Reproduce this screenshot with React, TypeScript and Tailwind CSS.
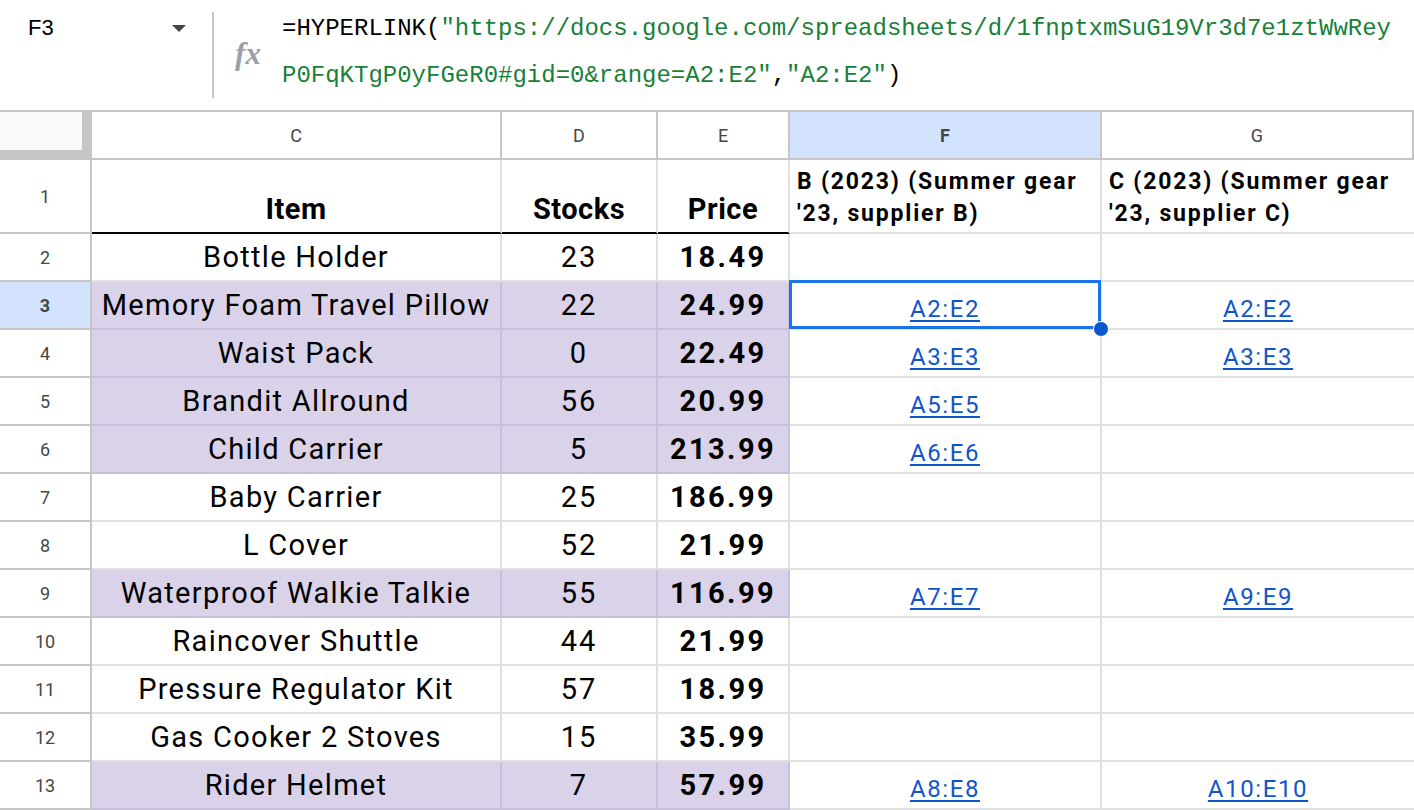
import React from 'react';

type Row = {
  n: number;
  item: string;
  stock: string;
  price: string;
  purple?: boolean;
  f?: string;
  g?: string;
};

const rows: Row[] = [
  { n: 2, item: 'Bottle Holder', stock: '23', price: '18.49' },
  { n: 3, item: 'Memory Foam Travel Pillow', stock: '22', price: '24.99', purple: true, f: 'A2:E2', g: 'A2:E2' },
  { n: 4, item: 'Waist Pack', stock: '0', price: '22.49', purple: true, f: 'A3:E3', g: 'A3:E3' },
  { n: 5, item: 'Brandit Allround', stock: '56', price: '20.99', purple: true, f: 'A5:E5' },
  { n: 6, item: 'Child Carrier', stock: '5', price: '213.99', purple: true, f: 'A6:E6' },
  { n: 7, item: 'Baby Carrier', stock: '25', price: '186.99' },
  { n: 8, item: 'L Cover', stock: '52', price: '21.99' },
  { n: 9, item: 'Waterproof Walkie Talkie', stock: '55', price: '116.99', purple: true, f: 'A7:E7', g: 'A9:E9' },
  { n: 10, item: 'Raincover Shuttle', stock: '44', price: '21.99' },
  { n: 11, item: 'Pressure Regulator Kit', stock: '57', price: '18.99' },
  { n: 12, item: 'Gas Cooker 2 Stoves', stock: '15', price: '35.99' },
  { n: 13, item: 'Rider Helmet', stock: '7', price: '57.99', purple: true, f: 'A8:E8', g: 'A10:E10' },
];

const cellFont = { fontFamily: 'Roboto, Arial, sans-serif' };

const FormulaBar = () => (
  <div className="flex h-[110px] items-stretch bg-white">
    {/* name box */}
    <div className="flex w-[212px] items-start justify-between pl-[28px] pr-[26px] pt-[15px]">
      <span className="text-[22px] leading-[26px] text-black" style={{ fontFamily: 'Arial, "Liberation Sans", sans-serif' }}>
        F3
      </span>
      <svg width="14" height="8" viewBox="0 0 14 8" className="mt-[10px]">
        <path d="M0 0 L14 0 L7 7 Z" fill="#444746" />
      </svg>
    </div>
    <div className="my-[12px] w-[2px] bg-[#c4c7c5]" />
    <div className="flex w-[68px] items-center justify-center pb-[2px]">
      <span
        className="text-[31px] font-bold italic text-[#9aa0a6]"
        style={{ fontFamily: '"Liberation Serif", serif' }}
      >
        fx
      </span>
    </div>
    <div
      className="pt-[5px] text-[24px] leading-[47px] text-black"
      style={{ fontFamily: '"Liberation Mono", monospace' }}
    >
      <div>
        =HYPERLINK(
        <span className="text-[#188038]">"https://docs.google.com/spreadsheets/d/1fnptxmSuG19Vr3d7e1ztWwRey</span>
      </div>
      <div>
        <span className="text-[#188038]">P0FqKTgP0yFGeR0#gid=0&amp;range=A2:E2"</span>,
        <span className="text-[#188038]">"A2:E2"</span>)
      </div>
    </div>
  </div>
);

const headCls =
  'flex items-center justify-center border-b-2 border-r-2 border-[#c4c7c5] text-[18px] text-[#444746]';

const Link = ({ text }: { text: string }) => (
  <span
    className="text-[24px] leading-[24px] tracking-[1.6px] text-[#1155cc] underline underline-offset-[3px]"
    style={cellFont}
  >
    {text}
  </span>
);

const supplierHead = [
  ['B (2023) (Summer gear', "'23, supplier B)"],
  ['C (2023) (Summer gear', "'23, supplier C)"],
];

export default function App() {
  return (
    <div className="h-[810px] w-[1414px] overflow-hidden bg-white">
      <FormulaBar />
      <div
        className="grid grid-cols-[92px_410px_156px_132px_312px_312px] border-t-2 border-[#c4c7c5]"
        style={{ fontFamily: 'Roboto, Arial, sans-serif' }}
      >
        {/* column headers */}
        <div className="h-[48px] border-b-[10px] border-r-[10px] border-[#c4c7c5] bg-[#f8f9fa]" />
        <div className={`${headCls} h-[48px]`}>C</div>
        <div className={`${headCls} h-[48px]`}>D</div>
        <div className={`${headCls} h-[48px]`}>E</div>
        <div className={`${headCls} h-[48px] bg-[#d3e3fd] font-bold text-[#041e49]`}>F</div>
        <div className={`${headCls} h-[48px] border-r-0`}>G</div>

        {/* row 1 */}
        <div className={`${headCls} h-[74px] text-[17px]`}>1</div>
        {['Item', 'Stocks', 'Price'].map((t) => (
          <div
            key={t}
            className="flex h-[74px] items-end justify-center border-b-2 border-r-2 border-b-black border-r-[#e1e1e1] pb-[5px] text-[29px] font-bold leading-[36px] tracking-[0.5px] text-black"
            style={cellFont}
          >
            {t}
          </div>
        ))}
        {supplierHead.map((lines, i) => (
          <div
            key={i}
            className={`flex h-[74px] flex-col justify-end border-b-2 border-[#e1e1e1] pb-[2px] pl-[7px] text-[23px] font-bold leading-[32px] tracking-[1.8px] text-black ${
              i === 0 ? 'border-r-2' : ''
            }`}
            style={cellFont}
          >
            <span>{lines[0]}</span>
            <span>{lines[1]}</span>
          </div>
        ))}

        {rows.map((r) => {
          const sel = r.n === 3;
          const data = r.purple
            ? 'bg-[#d9d2e9] border-[#c7c0d8]'
            : 'bg-white border-[#e1e1e1]';
          return (
            <React.Fragment key={r.n}>
              <div
                className={`${headCls} h-[48px] text-[17px] ${
                  sel ? 'bg-[#d3e3fd] font-bold text-[#041e49]' : ''
                }`}
              >
                {r.n}
              </div>
              <div
                className={`flex h-[48px] items-end justify-center border-b-2 border-r-2 pb-[5px] text-[29px] leading-[36px] tracking-[1.3px] text-black ${data}`}
                style={cellFont}
              >
                {r.item}
              </div>
              <div
                className={`flex h-[48px] items-end justify-center border-b-2 border-r-2 pb-[5px] text-[29px] leading-[36px] tracking-[2px] text-black ${data}`}
                style={cellFont}
              >
                {r.stock}
              </div>
              <div
                className={`flex h-[48px] items-end justify-center border-b-2 border-r-2 pb-[5px] text-[29px] font-bold leading-[36px] tracking-[2.4px] text-black ${data}`}
                style={cellFont}
              >
                {r.price}
              </div>
              <div className="relative flex h-[48px] items-end justify-center border-b-2 border-r-2 border-[#e1e1e1] pb-[7px]">
                {r.f && <Link text={r.f} />}
                {sel && (
                  <>
                    <div className="pointer-events-none absolute -left-[1px] -top-[2px] bottom-[-1px] right-[-1px] border-[3px] border-[#1a73e8]" />
                    <div className="absolute -bottom-[9px] -right-[9px] z-10 h-[16px] w-[16px] rounded-full border-[1.5px] border-white bg-[#0b57d0]" />
                  </>
                )}
              </div>
              <div className="flex h-[48px] items-end justify-center border-b-2 border-[#e1e1e1] pb-[7px]">
                {r.g && <Link text={r.g} />}
              </div>
            </React.Fragment>
          );
        })}
      </div>
    </div>
  );
}
